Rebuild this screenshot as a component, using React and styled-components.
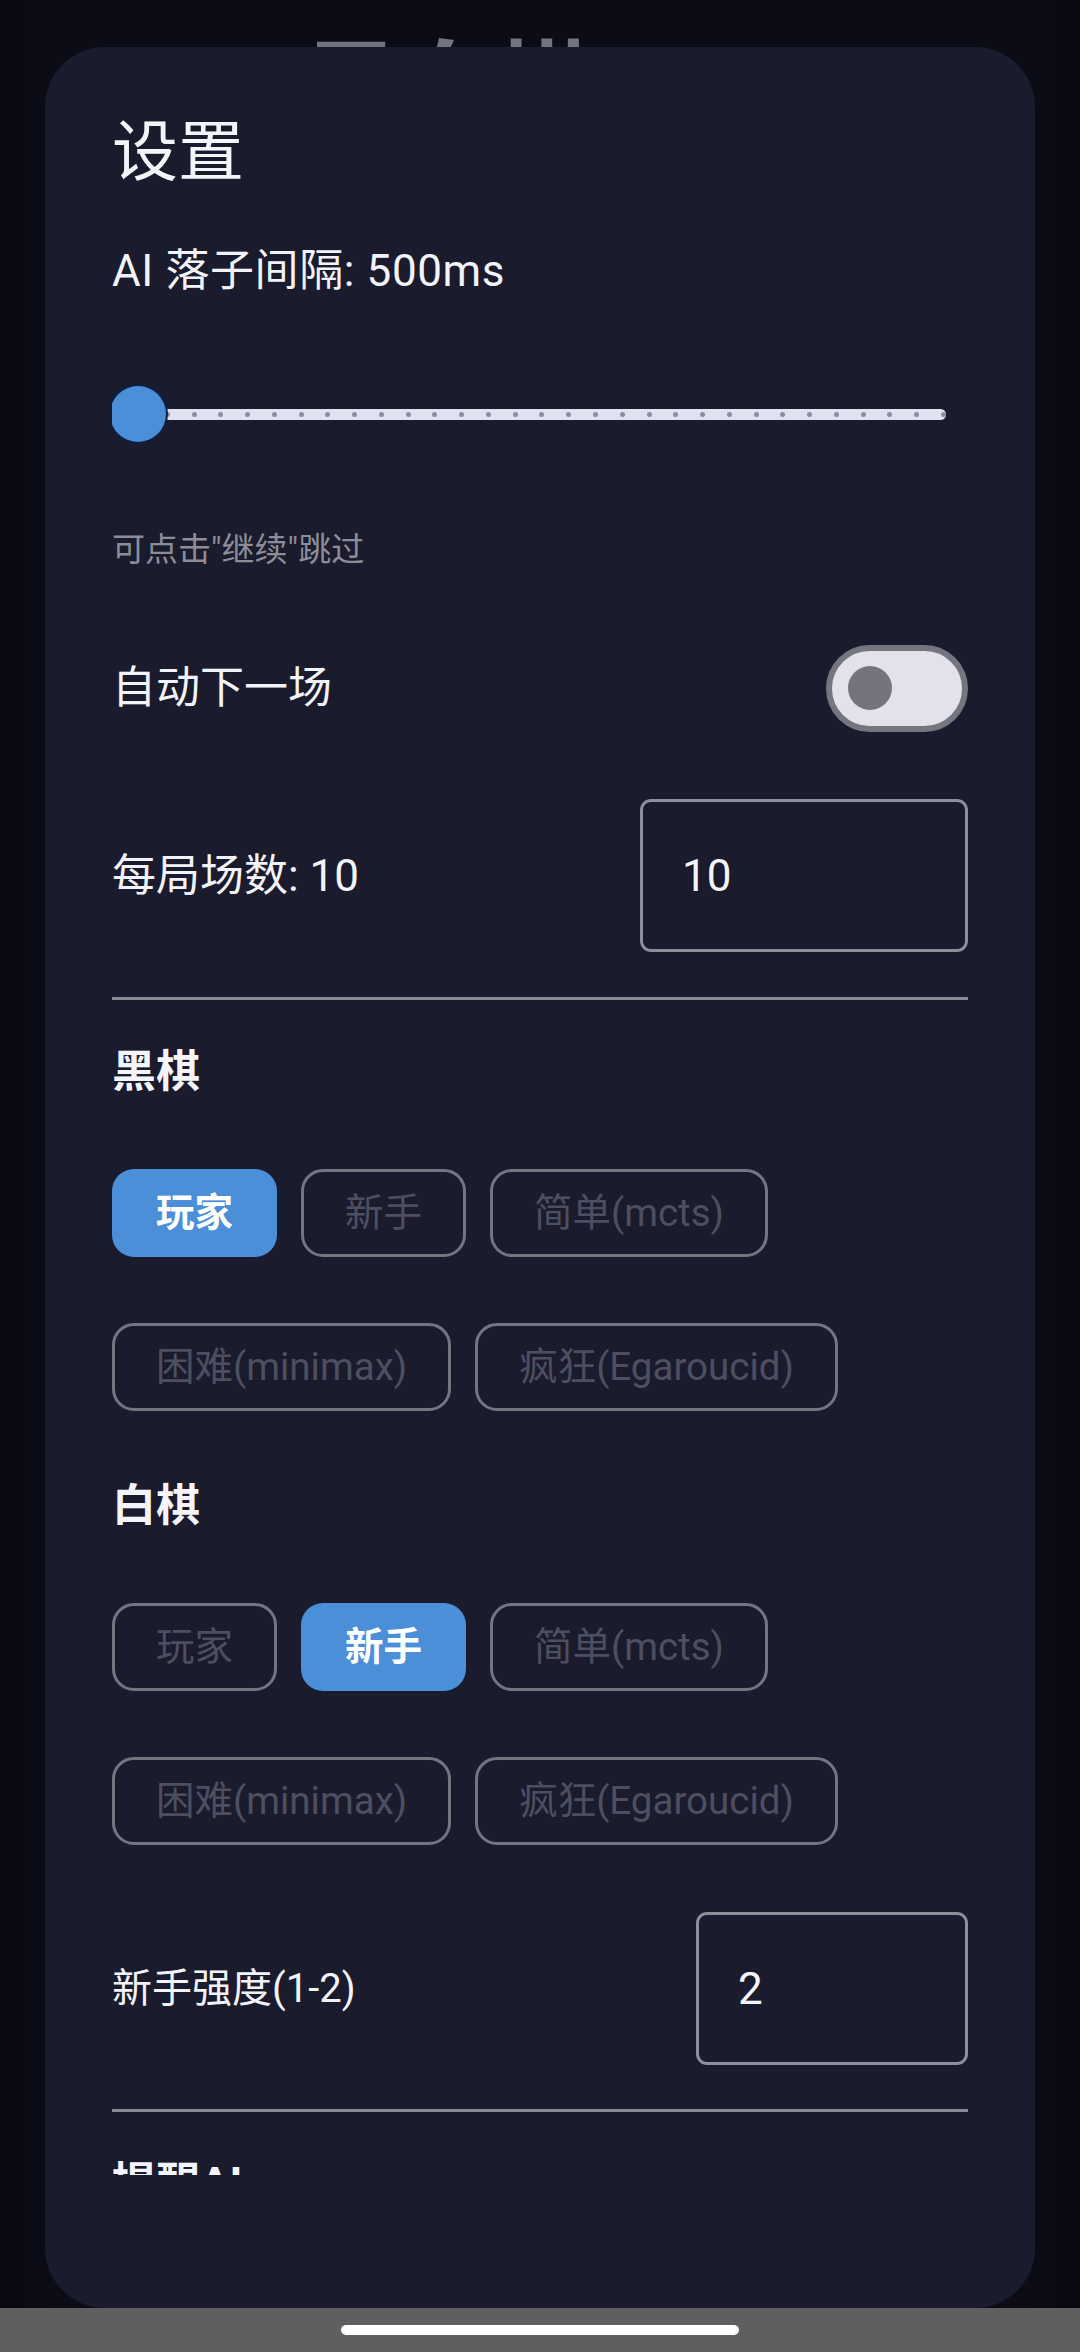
import React from "react";
import styled, { createGlobalStyle } from "styled-components";

const GlobalStyle = createGlobalStyle`
  html, body { margin: 0; padding: 0; background: #0a0b14; }
  body {
    font-family: Roboto, "Noto Sans CJK SC", "Noto Sans", sans-serif;
    color: #eef0f6;
    -webkit-font-smoothing: antialiased;
  }
  * { box-sizing: border-box; }
`;

const Screen = styled.div`
  position: relative;
  width: 1080px;
  height: 2352px;
  overflow: hidden;
  background: linear-gradient(90deg, #070810 0%, #0b0c16 5%, #0b0c16 95%, #070810 100%);
`;

const BackTitle = styled.h1`
  margin: 0;
  padding: 39px 0 0 303px;
  font-size: 96px;
  line-height: 96px;
  font-weight: 700;
  color: #72737d;
`;

const Scrim = styled.div`
  position: absolute;
  inset: 0;
  display: flex;
  flex-direction: column;
`;

const Dialog = styled.section`
  flex: none;
  height: 2261px;
  margin: 47px 45px 0;
  padding: 66px 67px 0;
  border-radius: 60px;
  background: #1a1b2c;
  display: flex;
  flex-direction: column;
`;

const DialogTitle = styled.h2`
  margin: 0;
  font-size: 66px;
  line-height: 80px;
  font-weight: 400;
  color: #f4f5fa;
`;

const ScrollArea = styled.div`
  flex: none;
  height: 1982px;
  overflow: hidden;
  display: flex;
  flex-direction: column;
  & > * { flex-shrink: 0; }
`;

const Label = styled.div`
  margin-top: ${(p) => p.$mt || 0}px;
  font-size: ${(p) => p.$size || 44}px;
  line-height: 56px;
  color: #f2f3f8;
  white-space: nowrap;
  letter-spacing: ${(p) => (p.$wide ? "0.6px" : "0")};
`;

const Helper = styled.div`
  margin-top: ${(p) => p.$mt || 0}px;
  font-size: 33px;
  line-height: 44px;
  color: #8c8d99;
`;

const SectionTitle = styled.h3`
  margin: ${(p) => p.$mt || 0}px 0 0;
  font-size: 44px;
  line-height: 56px;
  font-weight: 700;
  color: #f4f5fa;
`;

const Slider = styled.div`
  position: relative;
  margin-top: ${(p) => p.$mt || 0}px;
  height: 120px;
  display: flex;
  align-items: center;
  padding: 0 22px 0 26px;
`;

const Track = styled.div`
  flex: 1;
  height: 11px;
  border-radius: 6px;
  background: #e1e2ef;
  display: flex;
  justify-content: space-between;
  align-items: center;
`;

const Tick = styled.span`
  width: 5px;
  height: 5px;
  border-radius: 50%;
  background: #8d8e9f;
`;

const Thumb = styled.span`
  position: absolute;
  left: -2px;
  top: 32px;
  width: 56px;
  height: 56px;
  border-radius: 50%;
  background: #4a8fd8;
  box-shadow: 0 0 0 2px #0c1f45;
`;

const Row = styled.div`
  margin-top: ${(p) => p.$mt || 0}px;
  height: ${(p) => p.$h}px;
  display: flex;
  align-items: center;
  justify-content: space-between;
`;

const Switch = styled.div`
  width: 142px;
  height: 87px;
  border-radius: 44px;
  border: 6px solid #74757f;
  background: #e1e2ec;
  display: flex;
  align-items: center;
  padding-left: 16px;
`;

const SwitchKnob = styled.span`
  width: 44px;
  height: 44px;
  border-radius: 50%;
  background: #73747e;
`;

const NumberField = styled.input`
  width: ${(p) => p.$w}px;
  height: 153px;
  padding: 0 0 0 39px;
  border: 3px solid #8e8f9a;
  border-radius: 11px;
  background: transparent;
  color: #f4f5fa;
  font: inherit;
  font-size: 44px;
  outline: none;
`;

const Divider = styled.hr`
  margin: ${(p) => p.$mt || 0}px 0 0;
  height: 3px;
  border: none;
  background: #8a8b96;
`;

const ChipGroup = styled.div`
  margin-top: ${(p) => p.$mt || 0}px;
  display: flex;
  flex-wrap: wrap;
  column-gap: 24px;
  row-gap: 66px;
`;

const Chip = styled.button`
  height: 88px;
  padding: 0 41px;
  border-radius: 22px;
  border: 3px solid ${(p) => (p.$active ? "transparent" : "#74757f")};
  background: ${(p) => (p.$active ? "#4a8fd8" : "transparent")};
  color: ${(p) => (p.$active ? "#ffffff" : "#4d4f61")};
  font: inherit;
  font-size: 38.5px;
  line-height: 1;
  font-weight: ${(p) => (p.$active ? 700 : 400)};
  white-space: nowrap;
`;

const NavBar = styled.div`
  flex: 1;
  background: #5e5f5e;
  display: flex;
  justify-content: center;
  padding-top: 17px;
`;

const NavPill = styled.span`
  width: 398px;
  height: 10px;
  border-radius: 5px;
  background: #ffffff;
`;

const OPTIONS = ["玩家", "新手", "简单(mcts)", "困难(minimax)", "疯狂(Egaroucid)"];

function ChipSet({ selected, mt }) {
  return (
    <ChipGroup $mt={mt}>
      {OPTIONS.map((o) => (
        <Chip key={o} $active={o === selected}>
          {o}
        </Chip>
      ))}
    </ChipGroup>
  );
}

export default function App() {
  const ticks = Array.from({ length: 31 });
  return (
    <>
      <GlobalStyle />
      <Screen>
        <BackTitle>黑白棋</BackTitle>
        <Scrim>
          <Dialog>
            <DialogTitle>设置</DialogTitle>
            <ScrollArea>
              <Label $mt={50} $wide>
                AI 落子间隔: 500ms
              </Label>
              <Slider $mt={55}>
                <Track>
                  {ticks.map((_, i) => (
                    <Tick key={i} />
                  ))}
                </Track>
                <Thumb />
              </Slider>
              <Helper $mt={54}>{'可点击"继续"跳过'}</Helper>
              <Row $mt={72} $h={88}>
                <Label>自动下一场</Label>
                <Switch>
                  <SwitchKnob />
                </Switch>
              </Row>
              <Row $mt={67} $h={153}>
                <Label>每局场数: 10</Label>
                <NumberField $w={328} defaultValue="10" />
              </Row>
              <Divider $mt={45} />
              <SectionTitle $mt={44}>黑棋</SectionTitle>
              <ChipSet selected="玩家" mt={69} />
              <SectionTitle $mt={67}>白棋</SectionTitle>
              <ChipSet selected="新手" mt={69} />
              <Row $mt={67} $h={153}>
                <Label $size={40}>新手强度(1-2)</Label>
                <NumberField $w={272} defaultValue="2" />
              </Row>
              <Divider $mt={44} />
              <SectionTitle $mt={44}>提醒AI</SectionTitle>
            </ScrollArea>
          </Dialog>
          <NavBar>
            <NavPill />
          </NavBar>
        </Scrim>
      </Screen>
    </>
  );
}
